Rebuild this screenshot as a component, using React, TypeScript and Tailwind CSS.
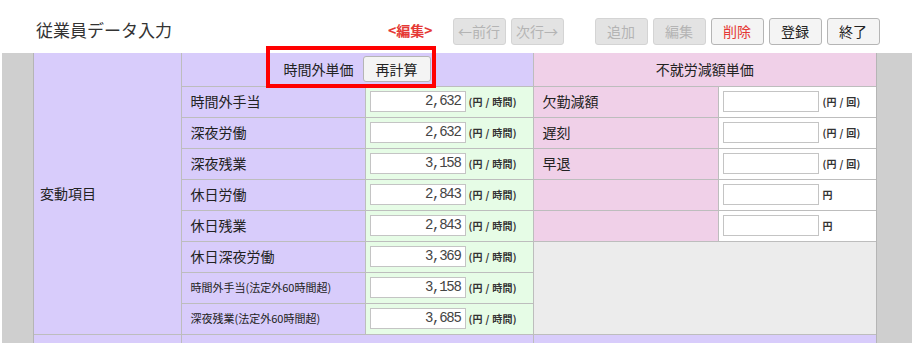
import React from 'react';

const jp = { fontFamily: '"Noto Sans CJK JP", "Noto Sans", sans-serif' };

const overtime = [
  { label: '時間外手当', value: '2,632' },
  { label: '深夜労働', value: '2,632' },
  { label: '深夜残業', value: '3,158' },
  { label: '休日労働', value: '2,843' },
  { label: '休日残業', value: '2,843' },
  { label: '休日深夜労働', value: '3,369' },
  { label: '時間外手当(法定外60時間超)', value: '3,158', small: true },
  { label: '深夜残業(法定外60時間超)', value: '3,685', small: true },
];

const absence = [
  { label: '欠勤減額', unit: '(円 / 回)' },
  { label: '遅刻', unit: '(円 / 回)' },
  { label: '早退', unit: '(円 / 回)' },
  { label: '', unit: '円' },
  { label: '', unit: '円' },
];

const ToolButton: React.FC<{ label: string; disabled?: boolean; danger?: boolean }> = ({ label, disabled, danger }) => (
  <button
    className={
      disabled
        ? 'h-[27px] w-[53px] rounded-[3px] border border-[#d4d4d4] bg-[#e3e3e3] text-[14px] text-[#b4b4b4]'
        : danger
          ? 'h-[27px] w-[53px] rounded-[3px] border border-[#b5b5b5] bg-[#f4f4f4] text-[14px] text-[#e53935]'
          : 'h-[27px] w-[53px] rounded-[3px] border border-[#b5b5b5] bg-[#f4f4f4] text-[14px] text-[#222]'
    }
  >
    {label}
  </button>
);

const NumInput: React.FC<{ value?: string }> = ({ value }) => (
  <div
    className="flex h-[21px] w-[96px] items-center justify-end border border-[#c4c4c4] bg-white pr-[4px] text-[14px] tracking-[-1.3px] text-[#444]"
    style={{ fontFamily: '"Liberation Mono", monospace' }}
  >
    {value}
  </div>
);

const App: React.FC = () => {
  const cell = 'border border-[#bdbdbd]';
  return (
    <div className="h-[343px] w-[912px] overflow-hidden bg-white text-[#222]" style={jp}>
      {/* top bar */}
      <div className="flex h-[53px] items-start">
        <div className="ml-[36px] mt-[17px] text-[17px] text-[#333]">従業員データ入力</div>
        <div className="ml-[216px] mt-[20px] text-[14px] font-bold text-[#e53935]">&lt;編集&gt;</div>
        <div className="ml-[20px] mt-[18px] flex gap-[5px]">
          <ToolButton label="←前行" disabled />
          <ToolButton label="次行→" disabled />
        </div>
        <div className="ml-[31px] mt-[18px] flex gap-[5px]">
          <ToolButton label="追加" disabled />
          <ToolButton label="編集" disabled />
          <ToolButton label="削除" danger />
          <ToolButton label="登録" />
          <ToolButton label="終了" />
        </div>
      </div>

      {/* body */}
      <div className="flex">
        <div className="ml-[2px] h-[290px] w-[32px] border-r border-[#b5b5b5] bg-[#cfcfcf]" />
        <div className="relative">
          <table className="table-fixed border-collapse">
            <colgroup>
              <col className="w-[147px]" />
              <col className="w-[184px]" />
              <col className="w-[168px]" />
              <col className="w-[185px]" />
              <col className="w-[158px]" />
            </colgroup>
            <tbody>
              <tr className="h-[33px]">
                <td rowSpan={9} className={`${cell} border-t-0 border-l-0 bg-[#d8ccfb] pl-[6px] text-[14px]`}>
                  変動項目
                </td>
                <td colSpan={2} className={`${cell} border-t-0 bg-[#d8ccfb]`}>
                  <div className="flex items-center justify-center gap-[9px] text-[14px]">
                    <span>時間外単価</span>
                    <button className="h-[26px] w-[68px] rounded-[3px] border border-[#b5b5b5] bg-[#f4f4f4] text-[14px]">
                      再計算
                    </button>
                  </div>
                </td>
                <td colSpan={2} className={`${cell} border-t-0 border-r-0 bg-[#f0d0e8] text-center text-[14px]`}>
                  不就労減額単価
                </td>
              </tr>
              {overtime.map((row, i) => (
                <tr key={row.label} className="h-[31px]">
                  <td className={`${cell} bg-[#d8ccfb] pl-[9px] ${row.small ? 'text-[11px]' : 'text-[14px]'}`}>
                    {row.label}
                  </td>
                  <td className={`${cell} bg-[#e6fce6] pl-[4px]`}>
                    <div className="flex items-center gap-[3px]">
                      <NumInput value={row.value} />
                      <span className="text-[10px] font-bold tracking-[0.3px] text-[#333]">(円 / 時間)</span>
                    </div>
                  </td>
                  {i < 5 && (
                    <>
                      <td className={`${cell} bg-[#f0d0e8] pl-[9px] text-[14px]`}>{absence[i].label}</td>
                      <td className={`${cell} border-r-0 bg-white pl-[4px]`}>
                        <div className="flex items-center gap-[4px]">
                          <NumInput />
                          <span className="text-[10px] font-bold tracking-[0.3px] text-[#333]">{absence[i].unit}</span>
                        </div>
                      </td>
                    </>
                  )}
                  {i === 5 && <td colSpan={2} rowSpan={3} className={`${cell} border-r-0 bg-[#ececec]`} />}
                </tr>
              ))}
              <tr className="h-[31px]">
                <td className={`${cell} border-b-0 border-l-0 bg-[#d8ccfb]`} />
                <td colSpan={2} className={`${cell} border-b-0 bg-[#d8ccfb]`} />
                <td colSpan={2} className={`${cell} border-b-0 border-r-0 bg-[#d8ccfb]`} />
              </tr>
            </tbody>
          </table>
          {/* highlight box */}
          <div className="pointer-events-none absolute left-[232px] top-[-7px] h-[42px] w-[170px] border-[4px] border-[#ff0000]" />
        </div>
        <div className="h-[290px] flex-1 border-l border-[#b5b5b5] bg-[#cfcfcf]" />
      </div>
    </div>
  );
};

export default App;
